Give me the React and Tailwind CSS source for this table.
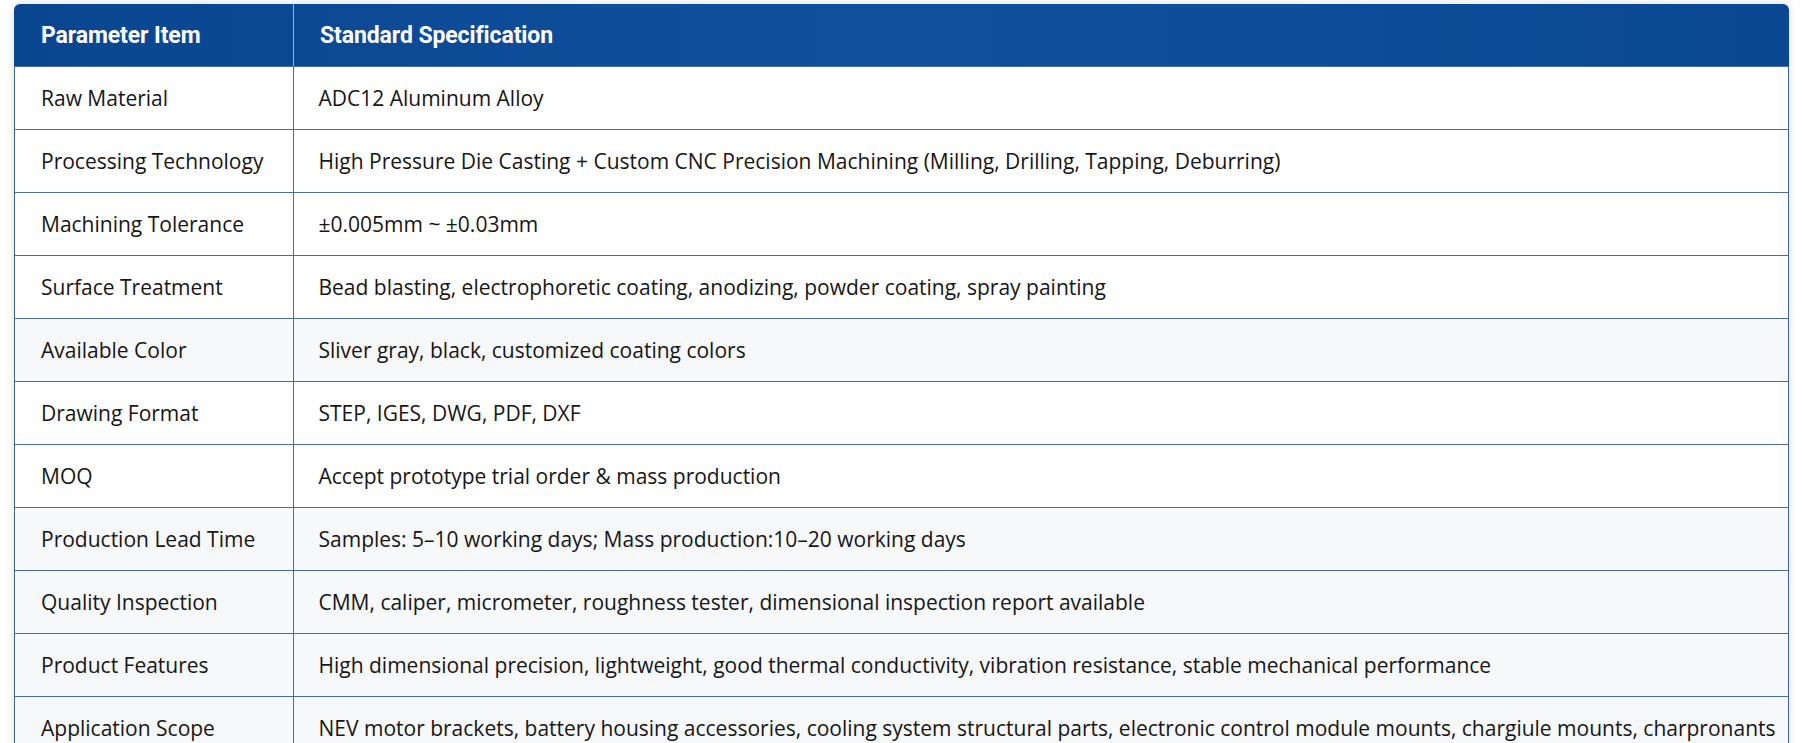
const rows = [
  ["Raw Material", "ADC12 Aluminum Alloy", false],
  [
    "Processing Technology",
    "High Pressure Die Casting + Custom CNC Precision Machining (Milling, Drilling, Tapping, Deburring)",
    false,
  ],
  ["Machining Tolerance", "±0.005mm ~ ±0.03mm", false],
  [
    "Surface Treatment",
    "Bead blasting, electrophoretic coating, anodizing, powder coating, spray painting",
    false,
  ],
  ["Available Color", "Sliver gray, black, customized coating colors", true],
  ["Drawing Format", "STEP, IGES, DWG, PDF, DXF", false],
  ["MOQ", "Accept prototype trial order & mass production", false],
  [
    "Production Lead Time",
    "Samples: 5–10 working days; Mass production:10–20 working days",
    true,
  ],
  [
    "Quality Inspection",
    "CMM, caliper, micrometer, roughness tester, dimensional inspection report available",
    true,
  ],
  [
    "Product Features",
    "High dimensional precision, lightweight, good thermal conductivity, vibration resistance, stable mechanical performance",
    true,
  ],
  [
    "Application Scope",
    "NEV motor brackets, battery housing accessories, cooling system structural parts, electronic control module mounts, chargiule mounts, charpronants",
    true,
  ],
];

export default function App() {
  return (
    <div className="h-[743px] overflow-hidden bg-white pl-[14px] pt-[4px]">
      <div className="w-[1775px] rounded-t-[6px] shadow-[0_0_8px_rgba(30,50,80,0.18)]">
        {/* header */}
        <div className="grid h-[62px] grid-cols-[280px_1fr] rounded-t-[6px] bg-gradient-to-r from-[#0a4690] via-[#0f509d] to-[#0a4893] font-['Roboto',sans-serif] text-[23px] font-bold tracking-[-0.1px] text-white">
          <div className="flex items-center border-r border-[#8fb0d8] pl-[27px] pt-[3px]">
            Parameter Item
          </div>
          <div className="flex items-center pl-[26px] pt-[3px]">Standard Specification</div>
        </div>
        {/* body */}
        <div className="border-x-[1.5px] border-[#3f6498] font-['Open_Sans',sans-serif] text-[21px] text-[#161616]">
          {rows.map(([label, value, shaded]) => (
            <div
              key={label}
              className={`grid h-[63px] grid-cols-[278.5px_1fr] border-t-[1.5px] border-[#4a6d9e] ${
                shaded ? "bg-[#f6f8fa]" : "bg-white"
              }`}
            >
              <div className="flex items-center whitespace-nowrap border-r-[1.5px] border-[#4a6d9e] pl-[26px] pt-[2px]">
                {label}
              </div>
              <div className="flex items-center whitespace-nowrap pl-[25px] pt-[2px]">{value}</div>
            </div>
          ))}
        </div>
      </div>
    </div>
  );
}
